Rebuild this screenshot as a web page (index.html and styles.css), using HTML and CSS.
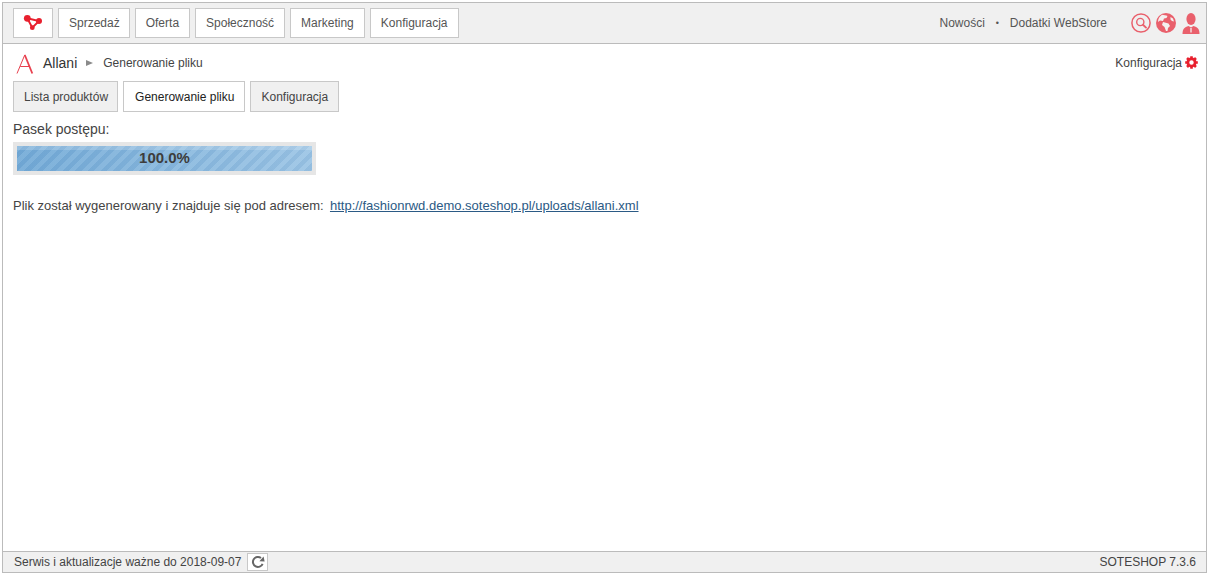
FILE: index.html
```html
<!DOCTYPE html>
<html lang="pl">
<head>
<meta charset="utf-8">
<title>Allani</title>
<link rel="stylesheet" href="styles.css">
</head>
<body>
<div class="frame">
  <header class="topbar">
    <nav class="menu">
      <a class="menu-btn logo-btn"><svg width="20" height="18" viewBox="0 0 20 18"><path d="M4.3 4.3 L16 7 L9.3 13.7 Z" fill="none" stroke="#e8202e" stroke-width="1.9"/><g fill="#e8202e"><circle cx="4.3" cy="4.3" r="3.4"/><circle cx="16" cy="7" r="3"/><circle cx="9.3" cy="13.7" r="2.4"/></g></svg></a>
      <a class="menu-btn menu-btn-tight">Sprzedaż</a>
      <a class="menu-btn">Oferta</a>
      <a class="menu-btn">Społeczność</a>
      <a class="menu-btn">Marketing</a>
      <a class="menu-btn">Konfiguracja</a>
    </nav>
    <div class="top-right">
      <a class="top-link">Nowości</a>
      <span class="dot">•</span>
      <a class="top-link">Dodatki WebStore</a>
      <div class="top-icons">
        <svg class="icon-search" width="20" height="20" viewBox="0 0 20 20"><circle cx="10" cy="10" r="9.1" fill="none" stroke="#e9606c" stroke-width="1.5"/><circle cx="9.3" cy="9" r="3.6" fill="none" stroke="#e9606c" stroke-width="1.4"/><path d="M12 11.8 L15 14.6" stroke="#e9606c" stroke-width="1.9" stroke-linecap="round"/></svg>
        <svg class="icon-globe" width="20" height="20" viewBox="0 0 20 20"><circle cx="10" cy="10" r="10" fill="#e9606c"/><path d="M6 1.8 C8 2.5 10 2 11.5 3 L10.5 5 L8 5.5 L7 8 L4 7.5 L2 9 C2 6 3.5 3.5 6 1.8Z M7 9 L12.5 10.5 L14 13 L12 15 L11.5 18 L10 18 L8.5 14 L6 12 Z M14.5 4 L17 5.5 L18 8.5 L16 8 L14.5 6.5 Z" fill="#f4f0f0"/></svg>
        <svg width="18" height="21" viewBox="0 0 18 21"><g fill="#e9606c"><ellipse cx="9" cy="6" rx="4.6" ry="6"/><path d="M0.5 21 C0.5 16 2.5 14 6.5 13 L9 14.5 L11.5 13 C15.5 14 17.5 16 17.5 21 Z"/></g><path d="M9 15 L9 19.5" stroke="#f4f0f0" stroke-width="1.3"/></svg>
      </div>
    </div>
  </header>

  <main class="content">
    <div class="crumbs">
      <div class="crumb-left">
        <svg class="allani-logo" width="18" height="20" viewBox="0 0 18 20"><path d="M1 19.5 L8.8 0.8 M4.2 12.5 L13 12.5" fill="none" stroke="#e8404e" stroke-width="1"/><path d="M8.8 1 L16.3 19.5" stroke="#e8404e" stroke-width="1.8" fill="none"/></svg>
        <span class="crumb-title">Allani</span>
        <span class="crumb-arrow"></span>
        <span class="crumb-page">Generowanie pliku</span>
      </div>
      <a class="crumb-config">Konfiguracja
        <svg width="13" height="13" viewBox="0 0 14 14"><circle cx="7" cy="7" r="3.9" fill="none" stroke="#e8202e" stroke-width="3"/><g stroke="#e8202e" stroke-width="2.8"><path d="M7 0.2 V13.8 M0.2 7 H13.8 M2.2 2.2 L11.8 11.8 M11.8 2.2 L2.2 11.8" stroke-dasharray="2.2 9.2"/></g></svg>
      </a>
    </div>

    <div class="tabs">
      <a class="tab tab-first">Lista produktów</a>
      <a class="tab tab-active">Generowanie pliku</a>
      <a class="tab">Konfiguracja</a>
    </div>

    <div class="progress-label">Pasek postępu:</div>
    <div class="progress">
      <div class="progress-bar">100.0%</div>
    </div>

    <p class="result">Plik został wygenerowany i znajduje się pod adresem:&nbsp; <a class="result-link" href="#">http://fashionrwd.demo.soteshop.pl/uploads/allani.xml</a></p>
  </main>

  <footer class="footer">
    <div class="footer-left">
      <span>Serwis i aktualizacje ważne do 2018-09-07</span>
      <a class="refresh"><svg width="14" height="14" viewBox="0 0 14 14"><path d="M11.6 8.8 A5 5 0 1 1 10 3" fill="none" stroke="#666" stroke-width="2"/><path d="M8.4 6.2 L13.6 6.4 L12.6 1.4 Z" fill="#666"/></svg></a>
    </div>
    <span class="version">SOTESHOP 7.3.6</span>
  </footer>
</div>
</body>
</html>
```
FILE: styles.css
```css
* { box-sizing: border-box; }
html, body { height: 100%; }
body {
  margin: 0;
  padding: 2px;
  background: #fff;
  font-family: "Liberation Sans", Arial, sans-serif;
  font-size: 12px;
  color: #444;
}
.frame {
  height: 571px;
  border: 1px solid #bbb;
  display: flex;
  flex-direction: column;
}
.topbar {
  height: 41px;
  flex: none;
  background: #f0f0f0;
  border-bottom: 1px solid #bbb;
  padding: 5px 0 0 10px;
  display: flex;
  justify-content: space-between;
}
.menu { display: flex; gap: 5px; align-items: flex-start; }
.menu-btn {
  height: 30px;
  padding: 0 10px;
  display: flex;
  align-items: center;
  background: #fff;
  border: 1px solid #c8c8c8;
  color: #555;
}
.menu-btn-tight { padding-right: 9px; }
.logo-btn { width: 40px; padding: 0 0 0 9px; }
.top-right { display: flex; align-items: flex-start; }
.top-link { color: #555; line-height: 30px; }
.dot { width: 25px; text-align: center; line-height: 30px; font-size: 9px; color: #555; }
.top-icons { display: flex; align-items: center; margin-left: 24px; margin-right: 6px; height: 30px; }
.icon-search { margin-right: 5px; }
.icon-globe { margin-right: 6px; }
.content { flex: 1; padding: 0 8px 0 10px; min-height: 0; }
.crumbs {
  height: 37px;
  display: flex;
  justify-content: space-between;
  align-items: center;
}
.crumb-left { display: flex; align-items: center; margin-left: 3px; }
.allani-logo { margin-right: 9px; margin-top: 2px; }
.crumb-title { font-size: 14px; color: #333; }
.crumb-arrow {
  width: 0; height: 0;
  margin: 1px 10px 0 9px;
  border-left: 7px solid #8a8a8a;
  border-top: 3.5px solid transparent;
  border-bottom: 3.5px solid transparent;
}
.crumb-page { color: #444; }
.crumb-config { display: flex; align-items: center; gap: 3px; color: #444; }
.tabs { display: flex; gap: 5px; }
.tab {
  height: 31px;
  padding: 0 10px;
  display: flex;
  align-items: center;
  background: #f0f0f0;
  border: 1px solid #c8c8c8;
  color: #444;
}
.tab-first { padding-right: 9px; }
.tab-active { background: #fff; color: #222; padding: 0 10px 0 11px; }
.progress-label { margin-top: 9px; font-size: 14px; line-height: 16px; color: #444; }
.progress {
  width: 303px;
  height: 33px;
  margin-top: 5px;
  background: #e6e6e6;
  padding: 4px;
}
.progress-bar {
  height: 25px;
  text-align: center;
  font-size: 15px;
  font-weight: 700;
  line-height: 24px;
  color: #3d3d3d;
  background-color: #7fb0da;
  background-image:
    linear-gradient(180deg, rgba(255,255,255,.18) 0 4px, rgba(255,255,255,0) 4px),
    repeating-linear-gradient(135deg, rgba(255,255,255,.07) 0 4.5px, rgba(40,90,150,.07) 4.5px 9px),
    linear-gradient(90deg, #74abd7, #9cc5e5);
}
.result { margin: 23px 0 0; font-size: 13px; line-height: 16px; color: #444; }
.result-link { color: #2b5a85; text-decoration: underline; margin-left: -1px; }
.footer {
  height: 21px;
  flex: none;
  background: #f0f0f0;
  border-top: 1px solid #bbb;
  padding: 0 10px 0 11px;
  display: flex;
  align-items: center;
  justify-content: space-between;
}
.footer-left { display: flex; align-items: center; gap: 6px; }
.refresh {
  width: 21px;
  height: 18px;
  background: #fff;
  border: 1px solid #c8c8c8;
  display: flex;
  align-items: center;
  justify-content: center;
}
.version { color: #444; }
```
